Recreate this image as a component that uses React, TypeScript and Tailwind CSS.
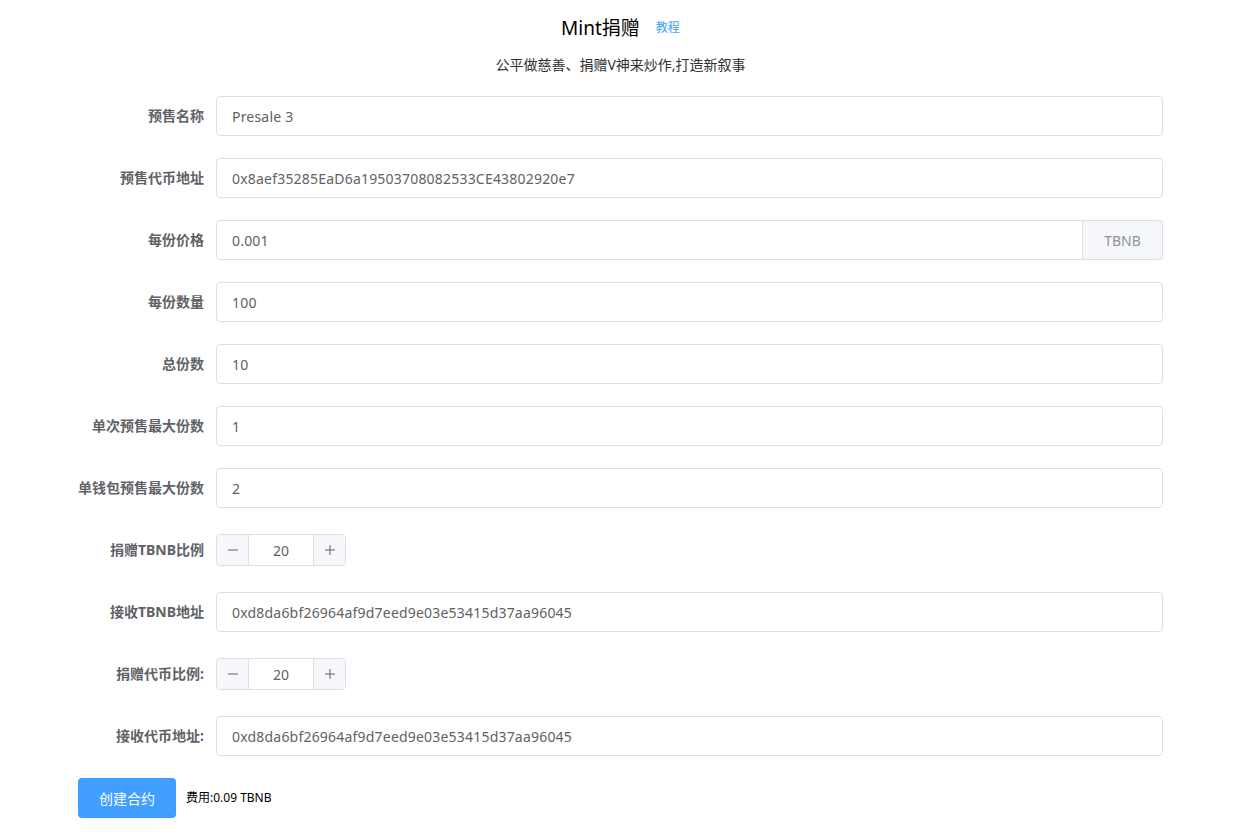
import React from "react";

const font = { fontFamily: '"Noto Sans", "Noto Sans CJK SC", sans-serif' };

function Label({ children }: { children: React.ReactNode }) {
  return (
    <div className="w-[138px] shrink-0 pr-3 text-right text-[14px] font-bold leading-[40px] text-[#606266]">
      {children}
    </div>
  );
}

function TextRow({ label, value, append }: { label: string; value: string; append?: string }) {
  return (
    <div className="mb-[22px] flex h-10">
      <Label>{label}</Label>
      <div className="flex flex-1">
        <div
          className={`flex h-10 flex-1 items-center border border-[#dcdfe6] bg-white px-[15px] text-[14px] tracking-[0.2px] text-[#606266] ${
            append ? "rounded-l-[4px]" : "rounded-[4px]"
          }`}
        >
          {value}
        </div>
        {append && (
          <div className="flex h-10 w-[80px] items-center justify-center rounded-r-[4px] border border-l-0 border-[#dcdfe6] bg-[#f5f7fa] text-[14px] text-[#909399]">
            {append}
          </div>
        )}
      </div>
    </div>
  );
}

function NumRow({ label, value }: { label: string; value: string }) {
  return (
    <div className="mb-[22px] flex h-10">
      <Label>{label}</Label>
      <div className="flex items-center">
        <div className="relative flex h-8 w-[130px] rounded-[4px] border border-[#dcdfe6] bg-white">
          <div className="flex w-[32px] items-center justify-center rounded-l-[4px] border-r border-[#dcdfe6] bg-[#f5f7fa] text-[#606266]">
            <svg width="12" height="12" viewBox="0 0 12 12">
              <path d="M1 6h10" stroke="#606266" strokeWidth="1" />
            </svg>
          </div>
          <div className="flex flex-1 items-center justify-center text-[14px] text-[#606266]">{value}</div>
          <div className="flex w-[32px] items-center justify-center rounded-r-[4px] border-l border-[#dcdfe6] bg-[#f5f7fa]">
            <svg width="12" height="12" viewBox="0 0 12 12">
              <path d="M1 6h10M6 1v10" stroke="#606266" strokeWidth="1" />
            </svg>
          </div>
        </div>
      </div>
    </div>
  );
}

export default function App() {
  return (
    <div className="min-h-[840px] w-[1252px] bg-white" style={font}>
      <div className="ml-[78px] w-[1085px]">
        <div className="flex justify-center pt-[14px] leading-[28px]">
          <span className="text-[19px] text-black">Mint捐赠</span>
          <span className="ml-4 text-[12px] text-[#409eff]">教程</span>
        </div>
        <div className="mt-[13px] text-center text-[14px] leading-[20px] text-[#303133]">
          公平做慈善、捐赠V神来炒作,打造新叙事
        </div>
        <div className="mt-[21px]">
          <TextRow label="预售名称" value="Presale 3" />
          <TextRow label="预售代币地址" value="0x8aef35285EaD6a19503708082533CE43802920e7" />
          <TextRow label="每份价格" value="0.001" append="TBNB" />
          <TextRow label="每份数量" value="100" />
          <TextRow label="总份数" value="10" />
          <TextRow label="单次预售最大份数" value="1" />
          <TextRow label="单钱包预售最大份数" value="2" />
          <NumRow label="捐赠TBNB比例" value="20" />
          <TextRow label="接收TBNB地址" value="0xd8da6bf26964af9d7eed9e03e53415d37aa96045" />
          <NumRow label="捐赠代币比例:" value="20" />
          <TextRow label="接收代币地址:" value="0xd8da6bf26964af9d7eed9e03e53415d37aa96045" />
          <div className="flex items-center">
            <button className="h-10 w-[98px] rounded-[4px] bg-[#409eff] text-[14px] text-white">创建合约</button>
            <span className="ml-[10px] text-[12px] text-black">费用:0.09 TBNB</span>
          </div>
        </div>
      </div>
    </div>
  );
}
